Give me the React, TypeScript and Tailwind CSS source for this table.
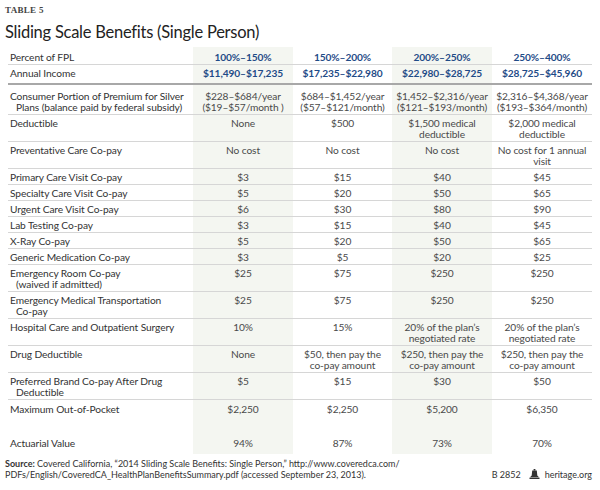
import React from "react";

type Cell = string | string[];

type Row = {
  label: string[];
  vals: Cell[];
  cls?: string;
};

const rows: Row[] = [
  {
    label: ["Consumer Portion of Premium for Silver", "Plans (balance paid by federal subsidy)"],
    vals: [
      ["$228–$684/year", "($19–$57/month )"],
      ["$684–$1,452/year", "($57–$121/month)"],
      ["$1,452–$2,316/year", "($121–$193/month)"],
      ["$2,316–$4,368/year", "($193–$364/month)"],
    ],
    cls: "pt-[6px] pb-[1px]",
  },
  {
    label: ["Deductible"],
    vals: ["None", "$500", ["$1,500 medical", "deductible"], ["$2,000 medical", "deductible"]],
  },
  {
    label: ["Preventative Care Co-pay"],
    vals: ["No cost", "No cost", "No cost", ["No cost for 1 annual", "visit"]],
  },
  { label: ["Primary Care Visit Co-pay"], vals: ["$3", "$15", "$40", "$45"] },
  { label: ["Specialty Care Visit Co-pay"], vals: ["$5", "$20", "$50", "$65"] },
  { label: ["Urgent Care Visit Co-pay"], vals: ["$6", "$30", "$80", "$90"] },
  { label: ["Lab Testing Co-pay"], vals: ["$3", "$15", "$40", "$45"] },
  { label: ["X-Ray Co-pay"], vals: ["$5", "$20", "$50", "$65"] },
  { label: ["Generic Medication Co-pay"], vals: ["$3", "$5", "$20", "$25"] },
  {
    label: ["Emergency Room Co-pay", "(waived if admitted)"],
    vals: ["$25", "$75", "$250", "$250"],
  },
  {
    label: ["Emergency Medical Transportation", "Co-pay"],
    vals: ["$25", "$75", "$250", "$250"],
  },
  {
    label: ["Hospital Care and Outpatient Surgery"],
    vals: ["10%", "15%", ["20% of the plan’s", "negotiated rate"], ["20% of the plan’s", "negotiated rate"]],
  },
  {
    label: ["Drug Deductible"],
    vals: [
      "None",
      ["$50, then pay the", "co-pay amount"],
      ["$250, then pay the", "co-pay amount"],
      ["$250, then pay the", "co-pay amount"],
    ],
  },
  {
    label: ["Preferred Brand Co-pay After Drug", "Deductible"],
    vals: ["$5", "$15", "$30", "$50"],
  },
];

const shade = "bg-[#f4f6f1]";
const grid = "grid grid-cols-[185px_100px_99px_100px_100px] whitespace-nowrap";
const pad = "pt-[3.5px] pb-[0.5px]";

function Lines({ cell }: { cell: Cell }) {
  const list = Array.isArray(cell) ? cell : [cell];
  return (
    <>
      {list.map((t, i) => (
        <div key={i}>{t}</div>
      ))}
    </>
  );
}

// small liberty bell mark
function BellIcon() {
  return (
    <svg width="11" height="10" viewBox="0 0 11 10" className="inline-block ml-[8px] mr-[5px] -mt-[3px]">
      <rect x="4.6" y="0" width="1.8" height="1.6" fill="#333" />
      <path d="M3.2 1.6 H7.8 L8.3 6.4 L10 8.2 H1 L2.7 6.4 Z" fill="#333" />
      <rect x="0.5" y="8.6" width="10" height="1.4" fill="#333" />
    </svg>
  );
}

export default function App() {
  return (
    <div className="w-[600px] h-[490px] bg-white overflow-hidden font-['Lato','Noto_Sans',sans-serif] text-[#333]">
      <div className="px-[5px] pt-[6px] font-['Liberation_Serif',serif] text-[9px] leading-[9px] font-bold tracking-[0.3px] text-[#444]">
        TABLE 5
      </div>
      <h1 className="px-[5px] mt-[6px] text-[16.5px] leading-[22px] text-[#222] tracking-[-0.25px]">
        Sliding Scale Benefits (Single Person)
      </h1>

      <div className="mx-[8px] mt-[4px] text-[10.2px] leading-[11px] tracking-[-0.1px]">
        {/* header rows */}
        <div className={`${grid} border-b border-[#d6d6d6] text-[#1f4b87] font-bold`}>
          <div className="pl-[2px] pt-[4.5px] pb-[1px] font-normal text-[#333]">Percent of FPL</div>
          <div className={`${shade} text-center pt-[4.5px]`}>100%–150%</div>
          <div className="text-center pt-[4.5px]">150%–200%</div>
          <div className={`${shade} text-center pt-[4.5px]`}>200%–250%</div>
          <div className="text-center pt-[4.5px]">250%–400%</div>
        </div>
        <div className={`${grid} border-b-2 border-[#a8a8a8] text-[#1f4b87] font-bold`}>
          <div className="pl-[2px] pt-[3px] pb-[4px] font-normal text-[#333]">Annual Income</div>
          <div className={`${shade} text-center pt-[3px]`}>$11,490–$17,235</div>
          <div className="text-center pt-[3px]">$17,235–$22,980</div>
          <div className={`${shade} text-center pt-[3px]`}>$22,980–$28,725</div>
          <div className="text-center pt-[3px]">$28,725–$45,960</div>
        </div>

        {rows.map((r, i) => (
          <div key={i} className={`${grid} border-b border-[#d6d6d6]`}>
            <div className={`pl-[2px] ${r.cls ?? pad}`}>
              {r.label.map((t, j) => (
                <div key={j} className={j > 0 ? "pl-[6px]" : ""}>
                  {t}
                </div>
              ))}
            </div>
            {r.vals.map((v, j) => (
              <div key={j} className={`text-center text-[#4a4a4a] ${j % 2 === 0 ? shade : ""} ${r.cls ?? pad}`}>
                <Lines cell={v} />
              </div>
            ))}
          </div>
        ))}

        <div className={grid}>
          <div className="pl-[2px] pt-[4px] pb-[20px]">Maximum Out-of-Pocket</div>
          <div className={`${shade} text-center text-[#4a4a4a] pt-[4px]`}>$2,250</div>
          <div className="text-center text-[#4a4a4a] pt-[4px]">$2,250</div>
          <div className={`${shade} text-center text-[#4a4a4a] pt-[4px]`}>$5,200</div>
          <div className="text-center text-[#4a4a4a] pt-[4px]">$6,350</div>
        </div>
        <div className={grid}>
          <div className="pl-[2px] pt-[3.5px] pb-[5px]">Actuarial Value</div>
          <div className={`${shade} text-center text-[#4a4a4a] pt-[3.5px]`}>94%</div>
          <div className="text-center text-[#4a4a4a] pt-[3.5px]">87%</div>
          <div className={`${shade} text-center text-[#4a4a4a] pt-[3.5px]`}>73%</div>
          <div className="text-center text-[#4a4a4a] pt-[3.5px]">70%</div>
        </div>
      </div>

      <div className="ml-[5px] mr-[8px] mt-[3.5px] flex items-end justify-between text-[9px] leading-[11px] text-[#333]">
        <div>
          <div>
            <span className="font-bold">Source:</span> Covered California, “2014 Sliding Scale Benefits: Single
            Person,” http://www.coveredca.com/
          </div>
          <div>PDFs/English/CoveredCA_HealthPlanBenefitsSummary.pdf (accessed September 23, 2013).</div>
        </div>
        <div className="whitespace-nowrap">
          B 2852
          <BellIcon />
          heritage.org
        </div>
      </div>
    </div>
  );
}
